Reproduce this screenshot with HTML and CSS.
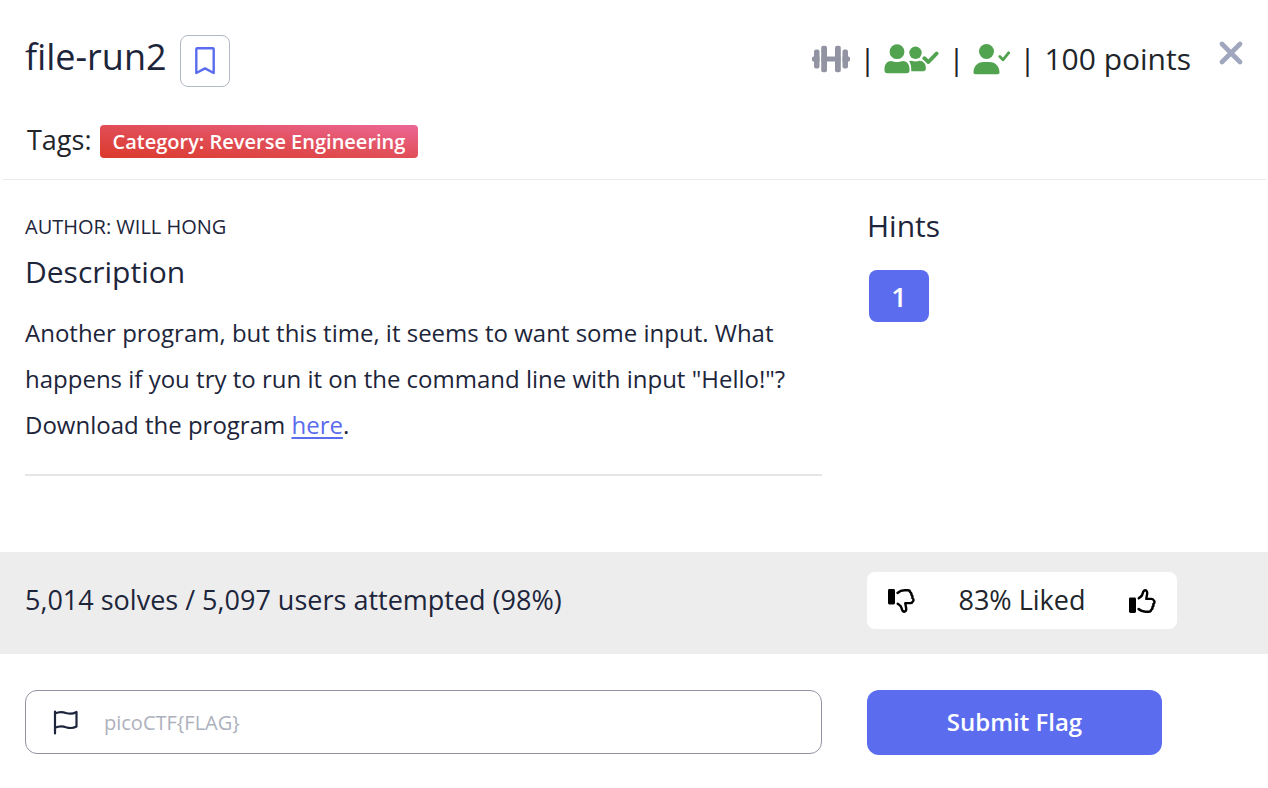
FILE: index.html
```html
<!DOCTYPE html>
<html lang="en">
<head>
<meta charset="utf-8">
<meta name="viewport" content="width=device-width, initial-scale=1">
<title>file-run2</title>
<link rel="stylesheet" href="styles.css">
</head>
<body>
<main class="challenge">
  <header class="header">
    <div class="title-row">
      <h1 class="title">file-run2</h1>
      <button class="bookmark" type="button" aria-label="Bookmark">
        <svg width="20" height="28" viewBox="0 0 20 28" fill="none" stroke="#5b6dee" stroke-width="2.4" stroke-linejoin="round"><path d="M1.300 2a.8.8 0 0 1 .8-.8h15.800a.8.8 0 0 1 .8.8v24L10 21.400 1.300 26z"/></svg>
      </button>
      <div class="stats">
        <svg class="dumbbell" width="38" height="28" viewBox="0 0 38 28" fill="#9294a3"><rect x="0" y="11.500" width="38" height="5" rx="1.500"/><path fill="#fff" d="M7.500 0h2v28h-2zM28.500 0h2v28h-2z"/><rect x="2" y="4.500" width="5.500" height="19" rx="2"/><rect x="9.200" y="0.800" width="5.800" height="26.500" rx="2"/><rect x="23" y="0.800" width="5.800" height="26.500" rx="2"/><rect x="30.500" y="4.500" width="5.500" height="19" rx="2"/></svg>
        <span class="bar">|</span>
        <svg class="users" width="55" height="30" viewBox="0 0 55 30" fill="#52a350"><circle cx="13" cy="7.700" r="7.400"/><path d="M7.500 17c2 .9 3.700 1 5.500 1s3.500-.1 5.500-1c4.500 0 7 3.500 7 8v1.500c0 1.800-1 2.800-2.800 2.800H3.300C1.500 29.300.5 28.300.5 26.500V25c0-4.500 2.500-8 7-8z"/><circle cx="31.500" cy="8.800" r="6.200"/><path d="M25 17.300c.7-.4 1.500-.6 2.300-.6 1.400.6 2.800.8 4.200.8s2.800-.2 4.200-.8c3.800.2 6.100 3 6.100 6.600v1.200c0 1.800-.9 2.700-2.700 2.700H27.200v-2.700c0-2.900-.7-5.200-2.200-7.200z"/><path d="m39.200 13.500 5.200 5L53.500 9" fill="none" stroke="#fff" stroke-width="6"/><path d="m40.300 14.200 4.100 3.800 8.200-8.500" fill="none" stroke="#52a350" stroke-width="3.800" stroke-linecap="round" stroke-linejoin="round"/></svg>
        <span class="bar">|</span>
        <svg class="user" width="37" height="31" viewBox="0 0 37 31" fill="#52a350"><circle cx="13.500" cy="7.500" r="7.500"/><path d="M10.500 18h6c6 0 10 4.500 10 10.300 0 1.200-.6 1.900-1.900 1.900H2.400C1.100 30.200.5 29.500.5 28.300.5 22.500 4.500 18 10.500 18z"/><path d="m26.800 12.500 3.200 3.300 5.600-7" fill="none" stroke="#52a350" stroke-width="2.800" stroke-linecap="round" stroke-linejoin="round"/></svg>
        <span class="bar">|</span>
        <span class="points">100 points</span>
      </div>
      <button class="close" type="button" aria-label="Close">
        <svg width="24" height="24" viewBox="0 0 24 24" fill="none" stroke="#9fa6bd" stroke-width="4.600" stroke-linecap="round"><path d="m3 3 18 18M21 3 3 21"/></svg>
      </button>
    </div>
    <div class="tags">
      <span class="tags-label">Tags:</span>
      <span class="tag">Category: Reverse Engineering</span>
    </div>
  </header>

  <div class="columns details">
    <section class="about">
      <p class="author">AUTHOR: WILL HONG</p>
      <h2 class="heading">Description</h2>
      <p class="description">Another program, but this time, it seems to want some input. What happens if you try to run it on the command line with input "Hello!"? Download the program <a href="#">here</a>.</p>
    </section>
    <section class="hints">
      <h2 class="heading">Hints</h2>
      <button class="hint" type="button">1</button>
    </section>
  </div>

  <div class="columns solves">
    <p class="solve-count">5,014 solves / 5,097 users attempted (98%)</p>
    <div class="rating">
      <button class="vote" type="button" aria-label="Dislike">
        <svg width="28" height="26" viewBox="0 0 28 26"><rect x="1" y="1" width="7" height="15.500" rx="1.400"/><path fill="none" stroke="#000" stroke-width="2.400" stroke-linejoin="round" stroke-linecap="round" d="M10.500 5c2.500-2.200 4.500-2.700 7-2.700h3.300c1.500 0 2.300.8 2.400 2 1.200.6 1.500 1.600 1.200 2.700 1.100.7 1.300 1.800.9 2.900 1.300.8 1.500 2.300.8 3.300-.5 1.400-1.400 1.900-2.800 1.900h-5c.2 2.300.9 4 .9 6 0 1.800-1 2.600-2 2.600-2.400 0-2.200-3.200-3.300-5.200-.8-1.200-2-2-3.200-2.800"/></svg>
      </button>
      <span>83% Liked</span>
      <button class="vote" type="button" aria-label="Like">
        <svg width="28" height="26" viewBox="0 0 28 26"><rect x="0" y="9.500" width="7" height="15.500" rx="1.400"/><path fill="none" stroke="#000" stroke-width="2.400" stroke-linejoin="round" stroke-linecap="round" d="M9.500 21c2.500 2.200 4.500 2.700 7 2.700h3.300c1.500 0 2.300-.8 2.400-2 1.200-.6 1.500-1.600 1.200-2.700 1.100-.7 1.300-1.800.9-2.900 1.300-.8 1.500-2.300.8-3.300-.5-1.400-1.400-1.900-2.800-1.900h-5c.2-2.300.9-4 .9-6 0-1.800-1-2.600-2-2.600-2.400 0-2.200 3.200-3.300 5.200-.8 1.200-2 2-3.200 2.800"/></svg>
      </button>
    </div>
  </div>

  <form class="columns submit">
    <label class="flag-field">
      <svg width="25" height="25" viewBox="0 0 25 25" fill="none" stroke="#1d253b" stroke-width="2.200" stroke-linecap="round" stroke-linejoin="round"><path d="M2 1.500v22M2 3.500c4-2 7-2 11-.5 4 1.300 7 1 10.500-1v14.500c-3.500 2-6.500 2-10.500.7-4-1.400-7-1.200-11 .6"/></svg>
      <input class="flag-input" type="text" placeholder="picoCTF{FLAG}" aria-label="Flag">
    </label>
    <button class="submit-button" type="submit">Submit Flag</button>
  </form>
</main>
</body>
</html>
```
FILE: styles.css
```css
* {
  box-sizing: border-box;
}

body {
  margin: 0;
  background: #fff;
  color: #1d253b;
  font-family: "Open Sans", "Noto Sans", sans-serif;
  font-size: 24px;
}

h1, h2, p {
  margin: 0;
  font-weight: 400;
}

button {
  border: 0;
  padding: 0;
  background: none;
  color: inherit;
  font: inherit;
  cursor: pointer;
}

svg {
  display: block;
  flex: none;
}

.header {
  margin: 0 2px 0 3px;
  padding: 35px 23px 21px 22px;
  border-bottom: 1px solid #ebebeb;
}

.title-row {
  display: flex;
  align-items: flex-start;
}

.title {
  font-size: 36px;
  line-height: 44px;
}

.bookmark {
  display: grid;
  place-items: center;
  width: 50px;
  height: 52px;
  margin-left: 13px;
  border: 1px solid #b3b8c6;
  border-radius: 8px;
}

.stats {
  display: flex;
  align-items: center;
  margin-left: auto;
  height: 48px;
  color: #212529;
  font-size: 30px;
}

.bar,
.points {
  padding-bottom: 2px;
}

.bar {
  width: 34px;
  text-align: center;
}

.close {
  margin: 6px 0 0 28px;
}

.tags {
  display: flex;
  align-items: center;
  gap: 8px;
  margin-top: 38px;
  padding-left: 2px;
  color: #212529;
  line-height: 33px;
}

.tags-label {
  margin-top: -4px;
  font-size: 27px;
}

.tag {
  padding: 0 13px;
  border-radius: 4px;
  background: linear-gradient(to top right, #db3a2b, #e14e57 50%, #ec6796);
  color: #fff;
  font-size: 20px;
  font-weight: 600;
}

.columns {
  display: grid;
  grid-template-columns: minmax(0, 68fr) minmax(0, 32fr);
  column-gap: 45px;
  padding: 0 26px 0 25px;
}

.details {
  padding-top: 24px;
  padding-bottom: 76px;
}

.about {
  padding-top: 8px;
  border-bottom: 2px solid #e5e5e7;
  padding-bottom: 26px;
}

.author {
  font-size: 20px;
  line-height: 30px;
}

.heading {
  font-size: 30px;
  line-height: 44px;
}

.about .heading {
  margin-top: 8px;
}

.description {
  margin-top: 16px;
  line-height: 46px;
}

.description a {
  color: #5b6dee;
  text-underline-offset: 3px;
}

.hint {
  width: 60px;
  height: 52px;
  margin: 22px 2px 0;
  border-radius: 8px;
  background: #5b6dee;
  color: #fff;
  font-size: 27px;
  font-weight: 600;
}

.solves {
  align-items: center;
  padding-top: 20px;
  padding-bottom: 25px;
  background: #ededed;
  font-size: 27px;
}

.solve-count,
.rating span {
  padding-bottom: 2px;
}

.rating {
  display: flex;
  align-items: center;
  justify-content: space-between;
  max-width: 310px;
  height: 57px;
  padding: 0 20px;
  border-radius: 8px;
  background: #fff;
  color: #212529;
}

.submit {
  padding-top: 36px;
  padding-bottom: 32px;
}

.flag-field {
  display: flex;
  align-items: center;
  gap: 26px;
  height: 64px;
  padding: 0 27px;
  border: 1px solid #9294a3;
  border-radius: 12px;
}

.flag-input {
  flex: 1;
  min-width: 0;
  padding: 0;
  border: 0;
  outline: 0;
  background: none;
  color: inherit;
  font: inherit;
  font-size: 20px;
}

.flag-input::placeholder {
  color: #adb1bc;
}

.submit-button {
  width: 100%;
  max-width: 295px;
  height: 65px;
  padding-bottom: 2px;
  border-radius: 12px;
  background: #5b6dee;
  color: #fff;
  font-weight: 600;
}

@media (max-width: 800px) {
  .title-row {
    flex-wrap: wrap;
  }

  .columns {
    grid-template-columns: minmax(0, 1fr);
    row-gap: 20px;
  }
}
```
